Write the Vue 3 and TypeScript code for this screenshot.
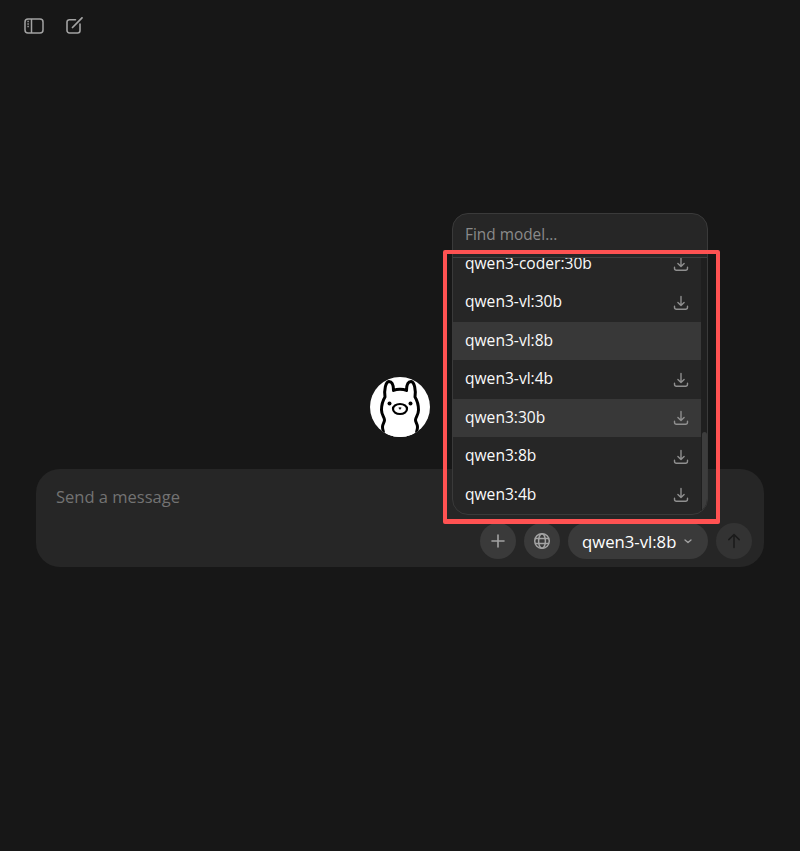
<script setup lang="ts">
interface ModelRow { name: string; hovered: boolean; download: boolean }
const models: ModelRow[] = [
  { name: 'qwen3-coder:30b', hovered: false, download: true },
  { name: 'qwen3-vl:30b', hovered: false, download: true },
  { name: 'qwen3-vl:8b', hovered: true, download: false },
  { name: 'qwen3-vl:4b', hovered: false, download: true },
  { name: 'qwen3:30b', hovered: true, download: true },
  { name: 'qwen3:8b', hovered: false, download: true },
  { name: 'qwen3:4b', hovered: false, download: true },
]
</script>

<template>
  <div class="page">
    <header class="toolbar">
      <button class="tool" aria-label="Toggle sidebar">
        <svg width="20" height="16" viewBox="0 0 20 16" fill="none" stroke="#a3a3a3" stroke-width="1.5">
          <rect x="1" y="1" width="18" height="14" rx="3" />
          <path d="M7.5 1v14" />
          <path d="M3.4 3.5h1.4M3.4 6h1.4M3.4 8.5h1.4" stroke-width="1.3" />
        </svg>
      </button>
      <button class="tool" aria-label="New chat">
        <svg width="18" height="18" viewBox="0 0 18 18" fill="none" stroke="#a3a3a3" stroke-width="1.6" stroke-linecap="round">
          <path d="M9.5 2.7H3.4A2.4 2.4 0 0 0 1 5.1v8.5A2.4 2.4 0 0 0 3.4 16h8.2a2.4 2.4 0 0 0 2.4-2.4V7" />
          <path d="M6.5 10.5 16 0.8" stroke-width="1.7" />
        </svg>
      </button>
    </header>

    <main class="center">
      <div class="logo">
        <svg width="60" height="60" viewBox="0 0 60 60">
          <defs><clipPath id="disc"><circle cx="30" cy="30" r="30" /></clipPath></defs>
          <circle cx="30" cy="30" r="30" fill="#fff" />
          <g clip-path="url(#disc)">
            <path d="M14 60C14 55 12.5 53 12.5 50C12.5 47 14.5 45.5 14.5 43C14.5 40 11.5 38 11.5 33C11.5 28 12.5 24 15 20C14 13 15.5 5 19 4.5C22.5 4.5 23.5 9 23.5 13.5C27 11.8 33 11.8 36.5 13.5C36.5 9 37.5 4.5 41 4.5C44.5 5 46 13 45 20C47.5 24 48.5 28 48.5 33C48.5 38 45.5 40 45.5 43C45.5 45.5 47.5 47 47.5 50C47.5 53 46 55 46 60" fill="#fff" stroke="#000" stroke-width="3" stroke-linejoin="round" />
            <circle cx="19.5" cy="26.5" r="2" fill="#000" />
            <circle cx="40.5" cy="26.5" r="2" fill="#000" />
            <ellipse cx="30" cy="32" rx="7" ry="5" fill="#fff" stroke="#000" stroke-width="2.2" />
            <path d="M28.8 30.8h2.400L30 32.4Z" fill="#000" stroke="#000" stroke-width="0.6" />
          </g>
        </svg>
      </div>

      <section class="composer">
        <div class="placeholder">Send a message</div>
        <div class="actions">
          <button class="circle" aria-label="Add">
            <svg width="14" height="14" viewBox="0 0 14 14" fill="none" stroke="#a3a3a3" stroke-width="1.6" stroke-linecap="round">
              <path d="M7 1v12M1 7h12" />
            </svg>
          </button>
          <button class="circle" aria-label="Web search">
            <svg width="18" height="18" viewBox="0 0 18 18" fill="none" stroke="#a3a3a3" stroke-width="1.5">
              <circle cx="9" cy="9" r="7.3" />
              <ellipse cx="9" cy="9" rx="3.4" ry="7.3" />
              <path d="M2 6.6h14M2 11.4h14" />
            </svg>
          </button>
          <button class="pill">
            <span>qwen3-vl:8b</span>
            <svg width="10" height="10" viewBox="0 0 10 10" fill="none" stroke="#a3a3a3" stroke-width="1.3" stroke-linecap="round" stroke-linejoin="round">
              <path d="M2 4l3 2.6L8 4" />
            </svg>
          </button>
          <button class="circle send" aria-label="Send">
            <svg width="16" height="16" viewBox="0 0 16 16" fill="none" stroke="#1a1a1a" stroke-width="1.5" stroke-linecap="round" stroke-linejoin="round">
              <path d="M8 14.5v-13M2.8 6.6 8 1.5l5.2 5.1" />
            </svg>
          </button>
        </div>

        <div class="popup">
          <div class="search">Find model...</div>
          <div class="list-wrap">
            <ul class="list">
              <li v-for="m in models" :key="m.name" class="row" :class="{ hovered: m.hovered }">
                <span class="row-name">{{ m.name }}</span>
                <svg v-if="m.download" width="16" height="16" viewBox="0 0 16 16" fill="none" stroke="#8f8f8f" stroke-width="1.4" stroke-linecap="round" stroke-linejoin="round">
                  <path d="M8 1.5v8.8M4.9 7.4 8 10.5l3.1-3.1" />
                  <path d="M1.5 11.2v1.1a2 2 0 0 0 2 2h9a2 2 0 0 0 2-2v-1.1" />
                </svg>
              </li>
            </ul>
            <div class="track"><div class="thumb"></div></div>
          </div>
        </div>
        <div class="annotation"></div>
      </section>
    </main>
  </div>
</template>

<style>
html, body { margin: 0; background: #171717; }
</style>

<style scoped>
.page {
  height: 851px;
  background: #171717;
  font-family: "Open Sans", "Noto Sans", sans-serif;
  overflow: hidden;
  display: flex;
  flex-direction: column;
}
button { border: 0; padding: 0; background: none; font: inherit; color: inherit; }
.toolbar {
  display: flex;
  align-items: center;
  gap: 22px;
  padding: 16px 0 0 24px;
  height: 20px;
}
.tool { display: flex; align-items: center; height: 20px; }
.center {
  display: flex;
  flex-direction: column;
  align-items: center;
  padding: 341px 36px 0;
}
.logo { width: 60px; height: 60px; margin-bottom: 32px; }
.logo svg { display: block; }
.composer {
  position: relative;
  align-self: stretch;
  height: 98px;
  box-sizing: border-box;
  background: #262626;
  border-radius: 24px;
  padding: 16px 12px 8px 20px;
  display: flex;
  flex-direction: column;
  justify-content: space-between;
}
.placeholder { font-size: 16.5px; line-height: 24px; color: #737373; }
.actions { display: flex; justify-content: flex-end; align-items: center; gap: 8px; }
.circle {
  width: 36px;
  height: 36px;
  border-radius: 50%;
  background: #3a3a3a;
  display: flex;
  align-items: center;
  justify-content: center;
}
.circle.send { background: #333; }
.pill {
  width: 140px;
  height: 36px;
  box-sizing: border-box;
  border-radius: 18px;
  background: #3a3a3a;
  padding: 0 15px 0 14px;
  display: flex;
  align-items: center;
  justify-content: space-between;
  color: #fff;
  font-size: 16.7px;
}
.popup {
  position: absolute;
  left: 416px;
  bottom: 52px;
  width: 256px;
  height: 302px;
  box-sizing: border-box;
  border: 1px solid #3a3a3a;
  border-radius: 16px;
  background: #262626;
  overflow: hidden;
  display: flex;
  flex-direction: column;
}
.search {
  flex: none;
  height: 44px;
  box-sizing: border-box;
  padding: 8.5px 12px 0;
  font-size: 15.4px;
  font-weight: 500;
  line-height: 24px;
  color: #8a8a8a;
  border-bottom: 1px solid #3f3f3f;
}
.list-wrap { flex: 1; display: flex; overflow: hidden; min-height: 0; }
.list {
  flex: 1;
  list-style: none;
  margin: -13.25px 0 0;
  padding: 0;
}
.row {
  height: 38.5px;
  box-sizing: border-box;
  padding: 0 12px;
  display: flex;
  align-items: center;
  justify-content: space-between;
  color: #fafafa;
  font-size: 15.6px;
  font-weight: 500;
}
.row-name { margin-bottom: 3px; }
.row.hovered { background: #383838; }
.track { flex: none; width: 6px; background: #1f1f1f; position: relative; }
.thumb { position: absolute; left: 1px; right: 0; top: 174px; bottom: 0; background: #3d3d3d; border-radius: 3px; }
.annotation {
  position: absolute;
  left: 407px;
  top: -219px;
  width: 277px;
  height: 274px;
  box-sizing: border-box;
  border: 4px solid #ff5252;
  border-bottom-width: 5px;
  border-radius: 2px;
  pointer-events: none;
}
</style>
